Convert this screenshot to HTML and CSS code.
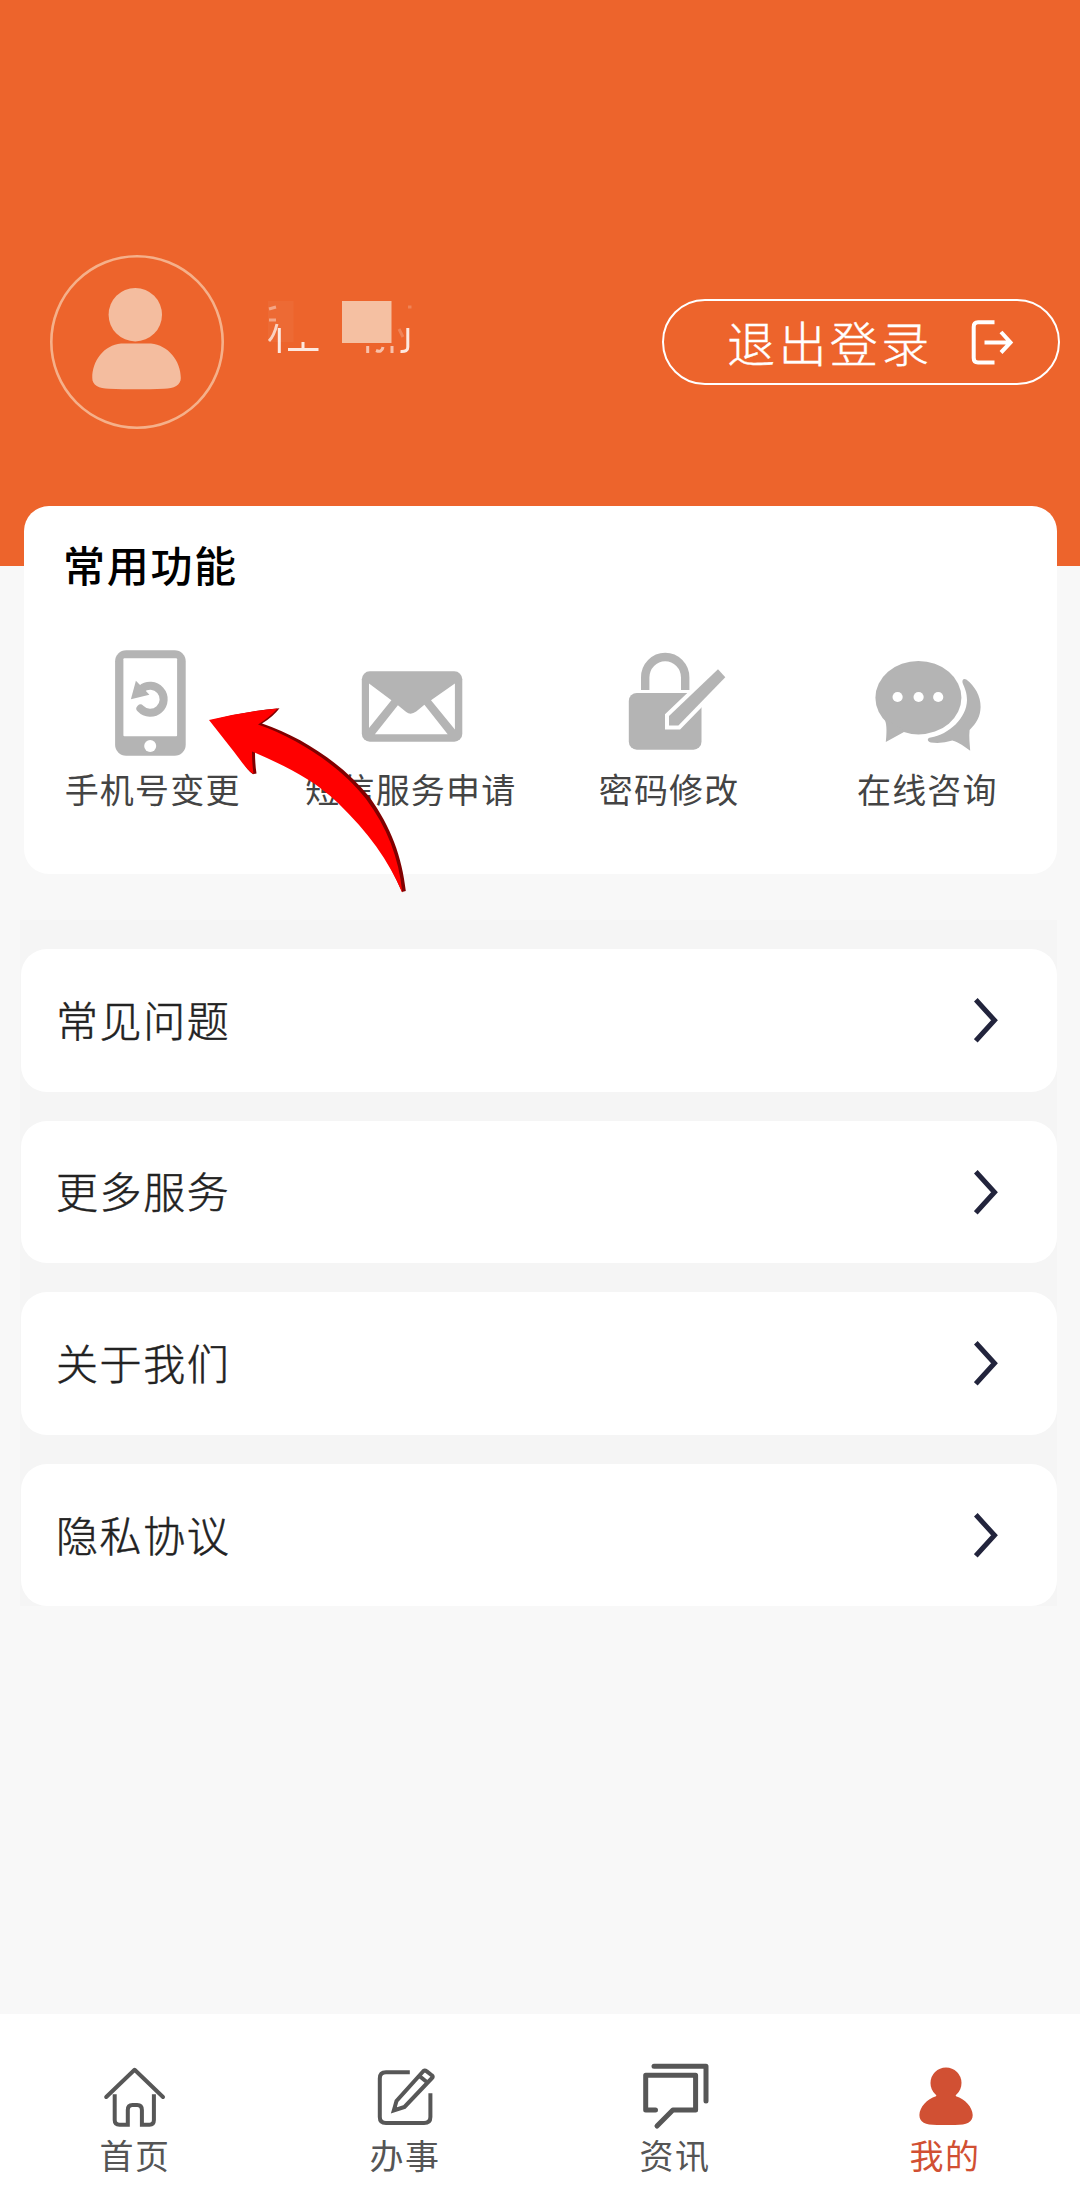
FILE: index.html
```html
<!DOCTYPE html>
<html lang="zh-CN">
<head>
<meta charset="utf-8">
<title>我的</title>
<link rel="stylesheet" href="styles.css">
</head>
<body>
<div class="app">
  <header class="hero">
    <div class="profile">
      <svg class="avatar" viewBox="50 255 174 174">
        <circle cx="137" cy="342" r="85.7" fill="none" stroke="#f5b08a" stroke-width="2.6"/>
        <circle cx="135.3" cy="314.7" r="26.7" fill="#f4bd9f"/>
        <path d="M121 343.5H151C168 345 181 361 180.800 378C181 385 174 388.700 164 388.700Q136 390 109 388.700C99 388.700 92 385 92.300 378C92 361 104 345 121 343.500Z" fill="#f4bd9f"/>
      </svg>
      <!-- user name, masked for privacy -->
      <svg class="masked-name" viewBox="264 296 152 62">
        <rect x="268" y="301" width="25.500" height="41" fill="#ed6a34"/>
        <g fill="none" stroke="#fff" stroke-width="3">
          <path d="M269 309L276 307M269 320H276" opacity=".4"/>
          <path d="M277 324Q274 336 269 341" opacity=".7"/>
          <path d="M279.300 328V353M288 349.500H318.500M303 342V349" opacity=".85"/>
          <path d="M367.700 346V353M376 350.500Q382 353 383 347M392 346V353" opacity=".6"/>
          <path d="M407.800 328V347Q408 352 400.500 351.500" opacity=".85"/>
          <path d="M399 329L403 337M408 307H411.500" opacity=".2"/>
        </g>
        <rect x="342" y="301" width="49.500" height="42" fill="#f5c0a2"/>
      </svg>
    </div>
    <button class="logout">
      <span>退出登录</span>
      <svg class="logout-icon" viewBox="970 318 45 49" fill="none" stroke="#fff" stroke-width="4">
        <path d="M994.500 322.300H978Q973.700 322.300 973.700 327V358Q973.700 362.500 978 362.500H994.500M984.500 342.500H1009M1001 332L1010.500 342.500L1001 352.500"/>
      </svg>
    </button>
  </header>

  <main class="content">
    <section class="card">
      <h2 class="card-title">常用功能</h2>
      <div class="features">
        <a class="feature">
          <svg class="feature-icon" viewBox="92.600 640 120 120">
            <rect x="114.700" y="650.300" width="70.600" height="105.400" rx="11" fill="#b4b4b4"/>
            <rect x="123" y="658.300" width="53.700" height="78" rx="1" fill="#fff"/>
            <circle cx="149.800" cy="746" r="6" fill="#fff"/>
            <path d="M141 689A13.500 13.500 0 1 1 140 708.600" fill="none" stroke="#b4b4b4" stroke-width="8" stroke-linecap="round"/>
            <path d="M135.500 680.700L130.500 699.300L149 694.800L145 690.500Z" fill="#b4b4b4"/>
          </svg>
          <span>手机号变更</span>
        </a>
        <a class="feature">
          <svg class="feature-icon" viewBox="350.800 640 120 120">
            <rect x="361.600" y="671.300" width="100.500" height="70.400" rx="8" fill="#b4b4b4"/>
            <path d="M368.800 683.500L391.200 700.300L368.800 728ZM454.700 683.500L430.800 700.300L454.700 729.500ZM397.700 705.300L406 712Q410.500 715.500 416 711.500L424.200 704.700L447.500 734.300H374.700Z" fill="#fff"/>
          </svg>
          <span>短信服务申请</span>
        </a>
        <a class="feature">
          <svg class="feature-icon" viewBox="609 640 120 120">
            <path d="M645.200 690V677.500A20 20.500 0 0 1 685.200 677.500V690" fill="none" stroke="#b4b4b4" stroke-width="8.400"/>
            <rect x="628.800" y="693" width="72.700" height="56.700" rx="8" fill="#b4b4b4"/>
            <path d="M718 669.300L725.300 677.300L678.400 725.600H669V716Z" fill="#b4b4b4" stroke="#fff" stroke-width="8" paint-order="stroke"/>
          </svg>
          <span>密码修改</span>
        </a>
        <a class="feature">
          <svg class="feature-icon" viewBox="867.200 640 120 120" fill="#b4b4b4">
            <ellipse cx="918.600" cy="697.700" rx="43" ry="36.700"/>
            <path d="M884 718Q888 723 886 742L906 731Z"/>
            <g fill="#fff"><circle cx="897.800" cy="697" r="5.100"/><circle cx="918.800" cy="697" r="5.100"/><circle cx="938.400" cy="697" r="5.100"/></g>
            <path d="M966.500 679.500C975 686 981 696 980.800 707C980.600 716 977 723 969.800 730C969 737 970 744 970.400 750.700C965 747 959 742 952.500 740.500Q942 744 931 742.500C927 741 927 738 931 737.500C949 734.500 967 718 967.200 700C967.200 693 965 688 962.800 683C962 679.500 964 678 966.500 679.500Z"/>
          </svg>
          <span>在线咨询</span>
        </a>
      </div>
      <svg class="pointer" viewBox="200 700 215 200">
        <path fill="#800000" d="M212 720Q247 711 279.500 708.300Q273 717 262 723.500C302 737 343 764 369.500 797C391 827 402 857 405.800 891L402 892C389 861 371 832 341 803C315 778 286 765 255 751.500C255 760 255.500 767 256.500 773.500L253 774.300C245 769 241 756 234 748Z"/>
        <path fill="#f00" d="M209 720Q244 711.500 277.500 708.500Q270 717 258 724.500C299 739 340 766 366 799C387 827 399 858 402.300 892.700C389 861 368 832 338 803C312 778 283 765 252 751.500C252 760 252.500 767 253.500 774C245 769 238 756 231 748Z"/>
      </svg>
    </section>

    <nav class="menu">
      <a class="menu-row"><span>常见问题</span><svg class="chevron" viewBox="0 0 28 50"><path d="M1.800 4.800L20.500 25.300L1.800 45.800"/></svg></a>
      <a class="menu-row"><span>更多服务</span><svg class="chevron" viewBox="0 0 28 50"><path d="M1.800 4.800L20.500 25.300L1.800 45.800"/></svg></a>
      <a class="menu-row"><span>关于我们</span><svg class="chevron" viewBox="0 0 28 50"><path d="M1.800 4.800L20.500 25.300L1.800 45.800"/></svg></a>
      <a class="menu-row"><span>隐私协议</span><svg class="chevron" viewBox="0 0 28 50"><path d="M1.800 4.800L20.500 25.300L1.800 45.800"/></svg></a>
    </nav>
  </main>

  <footer class="tabs">
    <a class="tab">
      <svg class="tab-icon" viewBox="0 0 70 70" stroke-width="4">
        <path stroke-linecap="round" stroke-linejoin="round" d="M6.200 37L34.600 9.800L63 37"/>
        <path d="M14.700 34.300V60Q14.700 64.700 19.500 64.700H27.800V50Q27.800 45 32.500 45H37.200Q41.900 45 41.900 50V64.700H49.500Q53.900 64.700 53.900 60V34.300"/>
      </svg>
      <span>首页</span>
    </a>
    <a class="tab">
      <svg class="tab-icon" viewBox="0 0 70 70" stroke-width="4">
        <path d="M39.800 12.300H16Q9.800 12.300 9.800 18.500V57Q9.800 63 16 63H54Q60.400 63 60.400 57V33.300"/>
        <path d="M23.800 50.500L26.500 41L53 11.500Q54.500 9.500 56.500 11.200L62 15.500Q63.500 16.500 62 18L34.500 47ZM50 16.500L58 23"/>
      </svg>
      <span>办事</span>
    </a>
    <a class="tab">
      <svg class="tab-icon" viewBox="0 0 70 70" stroke-width="5" stroke-linecap="round" stroke-linejoin="round">
        <path d="M14 6.300H66V41M15.500 50H5.700V15.300H55.600V50H32.900L17 66"/>
      </svg>
      <span>资讯</span>
    </a>
    <a class="tab active">
      <svg class="tab-icon" viewBox="0 0 70 70">
        <circle cx="36" cy="23" r="15.500"/>
        <path d="M25 33H47Q45 35.500 46 36.200C55 39 62.500 47 62.700 55C62.700 62 57 65 45 65H27C15 65 9.400 62 9.400 55C9.600 47 17 39 26 36.200Q27 35.500 25 33Z"/>
      </svg>
      <span>我的</span>
    </a>
  </footer>
</div>
</body>
</html>
```
FILE: styles.css
```css
* { box-sizing: border-box; }

body {
  margin: 0;
  background: #f8f8f8;
  font-family: "Noto Sans CJK SC", sans-serif;
  color: #333;
}

.app {
  display: flex;
  flex-direction: column;
  height: 2195px;
}

.hero {
  display: flex;
  justify-content: space-between;
  align-items: flex-start;
  height: 565.7px;
  flex: none;
  padding: 255px 20px 0 50px;
  background: #ed642c;
}

.profile {
  display: flex;
  align-items: flex-start;
  gap: 40px;
}

.avatar { width: 174px; height: 174px; }

.masked-name {
  width: 152px;
  height: 62px;
  margin-top: 41px;
}

.logout {
  display: flex;
  align-items: center;
  justify-content: space-between;
  width: 398px;
  height: 86px;
  margin-top: 43.5px;
  padding: 0 43px 0 63px;
  border: 2.5px solid #fff;
  border-radius: 43px;
  background: none;
  color: #fff;
  font: 300 48px/78px "Noto Sans CJK SC", sans-serif;
  letter-spacing: 3.4px;
  -webkit-text-stroke: 0.4px #fff;
}

.logout span { padding-bottom: 2px; }

.logout-icon { width: 45px; height: 49px; margin-top: 1px; }

.content {
  flex: 1;
  margin-top: -59.7px;
}

.card {
  position: relative;
  width: 1033px;
  height: 367.5px;
  margin-left: 23.5px;
  padding-top: 26.5px;
  border-radius: 25px;
  background: #fff;
}

.card-title {
  margin: 0 0 0 39.5px;
  color: #000;
  font-size: 42px;
  font-weight: 500;
  line-height: 62px;
  letter-spacing: 1.7px;
}

.features {
  display: grid;
  grid-template-columns: repeat(4, 1fr);
  margin-top: 45.5px;
}

.feature {
  display: flex;
  flex-direction: column;
  align-items: center;
  font-size: 34px;
  line-height: 50px;
  letter-spacing: 1.2px;
  white-space: nowrap;
  color: #444;
}

.feature-icon { width: 120px; height: 120px; margin-bottom: 3.5px; }

/* hint arrow lying over the feature grid */
.pointer {
  position: absolute;
  left: 176.5px;
  top: 194px;
  width: 215px;
  height: 200px;
}

.menu {
  display: flex;
  flex-direction: column;
  gap: 29px;
  width: 1037px;
  margin: 46px 0 0 20px;
  padding: 29.5px 0.5px 0;
  background: #f5f5f5;
}

.menu-row {
  display: flex;
  align-items: center;
  justify-content: space-between;
  height: 142.6px;
  padding: 0 55px 0 35.5px;
  border-radius: 26px;
  background: #fff;
  font-size: 42px;
  font-weight: 300;
  letter-spacing: 1.6px;
  color: #222;
  -webkit-text-stroke: 0.5px #222;
}

.menu-row span { padding-bottom: 4px; }

.chevron {
  width: 28px;
  height: 50px;
  fill: none;
  stroke: #22243c;
  stroke-width: 5;
}

.tabs {
  display: grid;
  grid-template-columns: repeat(4, 1fr);
  height: 181.5px;
  flex: none;
  padding-top: 46.5px;
  background: #fff;
}

.tab {
  display: flex;
  flex-direction: column;
  align-items: center;
  font-size: 34px;
  line-height: 50px;
  letter-spacing: 1.5px;
  color: #555;
}

.tab-icon {
  width: 70px;
  height: 70px;
  fill: none;
  stroke: #575757;
}

.tab.active { color: #d15033; }

.tab.active .tab-icon { fill: #d15033; stroke: none; }
```
